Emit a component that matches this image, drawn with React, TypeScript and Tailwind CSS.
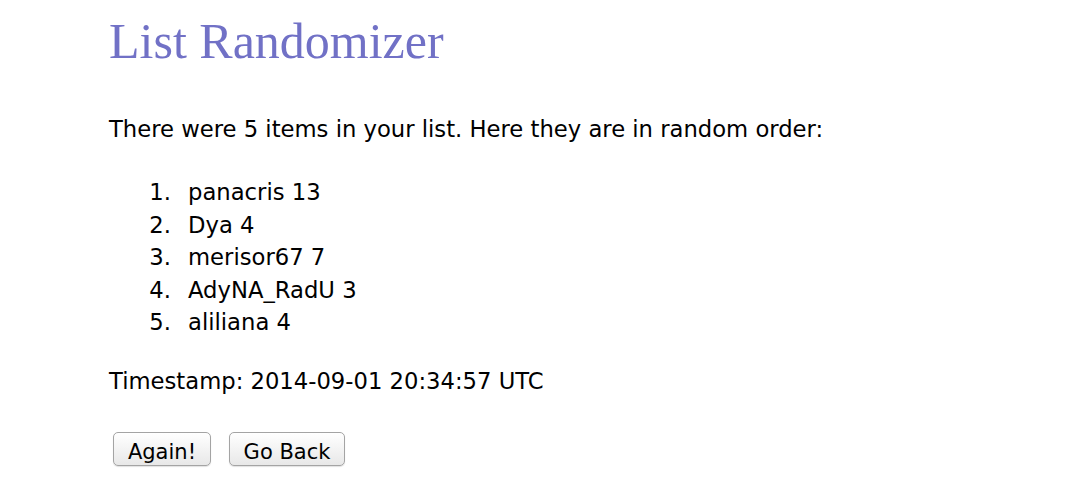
export default function App() {
  const items = ["panacris 13", "Dya 4", "merisor67 7", "AdyNA_RadU 3", "aliliana 4"];
  return (
    <div className="min-h-[484px] bg-white pl-[109px] pt-[12px] text-black" style={{ fontFamily: '"DejaVu Sans", Verdana, sans-serif' }}>
      <h1 className="text-[50px] leading-[58px] font-normal text-[#7171c6]" style={{ fontFamily: '"Liberation Serif", Georgia, serif' }}>
        List Randomizer
      </h1>
      <p className="mt-[45px] text-[22.7px] leading-[28px]">There were 5 items in your list. Here they are in random order:</p>
      <ol className="mt-[33px] text-[22.7px] leading-[32.5px]">
        {items.map((it, i) => (
          <li key={i} className="flex">
            <span className="w-[62px] text-right">{i + 1}.</span>
            <span className="pl-[17px]">{it}</span>
          </li>
        ))}
      </ol>
      <p className="mt-[28.5px] text-[22.7px] leading-[28px]">Timestamp: 2014-09-01 20:34:57 UTC</p>
      <div className="mt-[37px] flex gap-[18px] pl-[4px]">
        <button className="h-[34px] w-[98px] rounded-[5px] border border-[#a4a4a4] bg-gradient-to-b from-white to-[#e8e8e8] pt-[7px] text-[21px] leading-none shadow-[0_1px_1px_rgba(0,0,0,0.12)]">Again!</button>
        <button className="h-[34px] w-[116px] rounded-[5px] border border-[#a4a4a4] bg-gradient-to-b from-white to-[#e8e8e8] pt-[7px] text-[21px] leading-none shadow-[0_1px_1px_rgba(0,0,0,0.12)]">Go Back</button>
      </div>
    </div>
  );
}
